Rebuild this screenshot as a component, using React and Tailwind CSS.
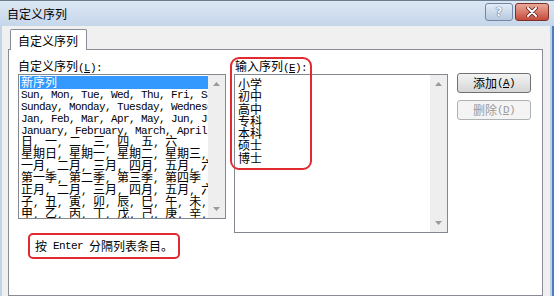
import React from 'react'

const CJK = "font-['Noto_Sans_CJK_SC','Noto_Sans_CJK_JP',sans-serif]"

// SimSun-like look: ASCII runs half width (6px per char), CJK runs 12px
function Mixed({ text }) {
  const parts = text.split(/([\x00-\x7f]+)/).filter(Boolean)
  return parts.map((p, i) =>
    /^[\x00-\x7f]+$/.test(p) ? (
      <span key={i} className="font-['Liberation_Mono',monospace] text-[11px] tracking-[-0.6px] whitespace-pre">
        {p}
      </span>
    ) : (
      <span key={i} className="text-[12px]">
        {p}
      </span>
    )
  )
}

const builtIn = [
  'Sun, Mon, Tue, Wed, Thu, Fri, Sat',
  'Sunday, Monday, Tuesday, Wednesday, Thursday',
  'Jan, Feb, Mar, Apr, May, Jun, Jul, Aug',
  'January, February, March, April, May',
  '日, 一, 二, 三, 四, 五, 六',
  '星期日, 星期一, 星期二, 星期三, 星期四',
  '一月, 二月, 三月, 四月, 五月, 六月',
  '第一季, 第二季, 第三季, 第四季',
  '正月, 二月, 三月, 四月, 五月, 六月',
  '子, 丑, 寅, 卯, 辰, 巳, 午, 未, 申',
  '甲, 乙, 丙, 丁, 戊, 己, 庚, 辛, 壬',
]

const entries = ['小学', '初中', '高中', '专科', '本科', '硕士', '博士']

function Arrow({ down }) {
  return (
    <svg width="7" height="4" viewBox="0 0 7 4">
      <path d={down ? 'M0 0h7L3.5 4z' : 'M0 4h7L3.5 0z'} fill="#9a9a9a" />
    </svg>
  )
}

function ScrollBar() {
  return (
    <div className="w-[17px] bg-[#eeeeee] flex flex-col justify-between items-center py-[7px]">
      <Arrow />
      <Arrow down />
    </div>
  )
}

function Underlined({ label, hot }) {
  return (
    <>
      <Mixed text={label} />
      <span className="font-['Liberation_Mono',monospace] text-[11px] tracking-[-0.6px]">
        (<span className="underline">{hot}</span>):
      </span>
    </>
  )
}

export default function App() {
  return (
    <div className={`w-[554px] h-[296px] overflow-hidden flex flex-col bg-[#c9d9ed] text-black ${CJK}`}>
      {/* title bar */}
      <div className="h-[26px] flex items-center justify-between pl-[7px] pr-[5px] bg-gradient-to-b from-[#dce7f4] to-[#c6d6ea] border-t border-[#6c7c91]">
        <span className="text-[12px] leading-none pt-[1px]">自定义序列</span>
        <div className="flex items-center gap-[2px] -mt-[3px]">
          <div className="w-[28px] h-[18px] rounded-[3px] border border-[#7487a1] bg-gradient-to-b from-[#e3ecf6] to-[#b7c9df] flex items-center justify-center">
            <span className="font-['DejaVu_Sans',sans-serif] font-bold text-[12px] leading-none text-[#f4f8fc] [text-shadow:0_0_1px_#4a5d78,0_0_1px_#4a5d78]">
              ?
            </span>
          </div>
          <div className="w-[34px] h-[18px] rounded-[3px] border border-[#7a3229] bg-gradient-to-b from-[#e9a899] to-[#c5493b] flex items-center justify-center">
            <svg width="12" height="10" viewBox="0 0 12 10">
              <path d="M2 1l8 8M10 1L2 9" stroke="#5a221c" strokeWidth="3.6" strokeLinecap="round" />
              <path d="M2 1l8 8M10 1L2 9" stroke="#ffffff" strokeWidth="2" strokeLinecap="round" />
            </svg>
          </div>
        </div>
      </div>

      {/* body */}
      <div className="flex-1 flex">
        <div className="w-[2px] bg-[#c3d4e8]" />
        <div className="flex-1 bg-[#f0f0f0] pt-[3px] pl-[6px] pr-[7px] flex flex-col">
          <div className="flex pl-[2px]">
            <div className="relative z-10 -mb-px w-[77px] h-[21px] border border-b-0 border-[#898c95] rounded-t-[2px] bg-white pl-[7px] pt-[4px] text-[12px] leading-[14px]">
              自定义序列
            </div>
          </div>
          <div className="flex-1 border border-[#898c95] bg-white flex pt-[9px] pl-[9px]">
            {/* left column */}
            <div className="w-[208px] flex flex-col">
              <div className="h-[15px] text-[12px] leading-[13px] whitespace-nowrap">
                <Underlined label="自定义序列" hot="L" />
              </div>
              <div className="h-[145px] border border-[#828790] flex">
                <div className="flex-1 overflow-hidden pl-px pt-px">
                  <div className="h-[13px] text-[12px] leading-[12px] bg-[#3399ff] text-white pl-[1px] whitespace-nowrap">
                    <Mixed text="新序列" />
                  </div>
                  {builtIn.map((row) => (
                    <div key={row} className="h-[12px] text-[12px] leading-[8px] pl-[1px] whitespace-nowrap">
                      <Mixed text={row} />
                    </div>
                  ))}
                </div>
                <ScrollBar />
              </div>
              <div className="mt-[14px] ml-[10px] self-start h-[26px] border-2 border-[#e12a31] rounded-[5px] px-[5px] flex items-center whitespace-nowrap text-[12px] leading-[12px]">
                <Mixed text="按 Enter 分隔列表条目。" />
              </div>
            </div>

            {/* right column */}
            <div className="relative ml-[8px] w-[214px] flex flex-col">
              <div className="h-[15px] text-[12px] leading-[13px] pl-[1px] whitespace-nowrap">
                <Underlined label="输入序列" hot="E" />
              </div>
              <div className="h-[159px] border border-[#828790] flex">
                <div className="flex-1 pl-[3px] pt-[3px] text-[12px]">
                  {entries.map((e) => (
                    <div key={e} className="h-[12.3px] leading-[11px]">
                      {e}
                    </div>
                  ))}
                </div>
                <ScrollBar />
              </div>
              <div className="absolute left-[-4px] top-[-2px] w-[82px] h-[113px] border-2 border-[#e12a31] rounded-[9px]" />
            </div>

            {/* buttons */}
            <div className="ml-[9px] w-[74px] pt-[14px] flex flex-col gap-[7px]">
              <button className="h-[20px] rounded-[3px] border border-[#707070] bg-gradient-to-b from-[#f3f3f3] to-[#d6d6d6] text-[12px] leading-none flex items-center justify-center">
                添加<span className="font-['Liberation_Mono',monospace] text-[11px] tracking-[-0.6px]">(<span className="underline">A</span>)</span>
              </button>
              <button className="h-[20px] rounded-[3px] border border-[#adb2b5] bg-[#f4f4f4] text-[#9a9a9a] text-[12px] leading-none flex items-center justify-center">
                删除<span className="font-['Liberation_Mono',monospace] text-[11px] tracking-[-0.6px]"> (<span className="underline">D</span>)</span>
              </button>
            </div>
          </div>
        </div>
        <div className="w-[4px] flex">
          <div className="w-[2px] bg-[#bcd2ea]" />
          <div className="w-[2px] bg-[#4d7fb6]" />
        </div>
      </div>
    </div>
  )
}
